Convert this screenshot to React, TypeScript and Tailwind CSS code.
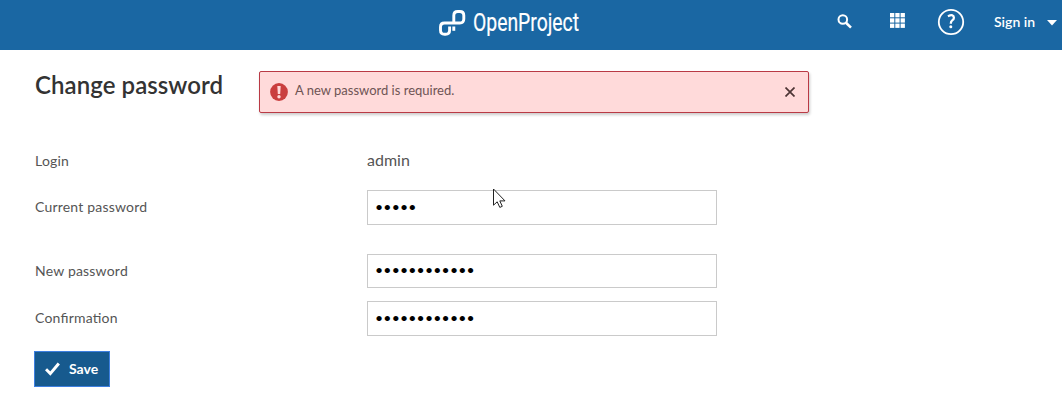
import type { ReactNode } from "react";

function Logo() {
  return (
    <svg width="200" height="48" viewBox="0 0 200 48" className="block">
      <g fill="none" stroke="#fff" strokeWidth="2.9" strokeLinecap="butt" strokeLinejoin="round">
        <path d="M15.8 23V15.5Q15.8 11.5 19.8 11.5H21.8Q25.8 11.5 25.8 15.5V19Q25.8 23 21.8 23H6.5Q2.5 23 2.5 27V30.3Q2.5 34.3 6.5 34.3H7.6Q11.6 34.3 11.6 30.3V26.5" />
        <path d="M15.8 26.5V30.8" />
      </g>
      <text x="35" y="31" fill="#fff" stroke="#fff" strokeWidth="0.2" fontFamily="Roboto, sans-serif" fontSize="26.5" textLength="106" lengthAdjust="spacingAndGlyphs">
        OpenProject
      </text>
    </svg>
  );
}

function Header() {
  return (
    <header className="flex h-[50px] bg-[#1a67a3] text-white">
      <div className="ml-[438px] w-[200px] shrink-0">
        <Logo />
      </div>
      <nav className="ml-[199px] flex h-[43px] items-center">
        <svg width="15" height="15" viewBox="0 0 15 15" fill="none" stroke="#fff" strokeWidth="2">
          <circle cx="5.8" cy="5.5" r="4.3" />
          <path d="M9 8.7L14 13.6" strokeWidth="2.6" />
        </svg>
        <svg width="15" height="15" viewBox="0 0 15 15" fill="#fff" className="-mt-[2px] ml-[38px]">
          {[0, 5.3, 10.6].map((y) =>
            [0, 5.3, 10.6].map((x) => <rect key={`${x}-${y}`} x={x} y={y} width="4.3" height="4.3" />),
          )}
        </svg>
        <svg width="28" height="28" viewBox="0 0 28 28" fill="none" stroke="#fff" className="ml-[32px]">
          <circle cx="14" cy="14" r="12.2" strokeWidth="1.8" />
          <path d="M10.9 8.2Q16.9 5.6 16.9 9.7Q16.9 11.3 15.2 12.4Q13.8 13.4 13.8 15.7" strokeWidth="2.3" />
          <circle cx="13.8" cy="18.8" r="1.5" fill="#fff" stroke="none" />
        </svg>
        <span className="-mt-[1px] ml-[29px] w-[42px] text-[14px] font-semibold whitespace-nowrap">Sign in</span>
        <svg width="10" height="6" viewBox="0 0 10 6" fill="#fff" className="mt-[2px] ml-[11px]">
          <path d="M0 0H10L5 5.6Z" />
        </svg>
      </nav>
    </header>
  );
}

function ErrorNotice() {
  return (
    <div className="flex h-[42px] w-[550px] items-center rounded-[2px] border border-[#b93a45] bg-[#ffdada] pl-[10px] shadow-[1px_2px_3px_rgba(0,0,0,0.2)]">
      <svg width="18" height="18" viewBox="0 0 18 18">
        <circle cx="9" cy="9" r="8.9" fill="#ca3f3f" />
        <path d="M7.3 3H10.7L10.2 11H7.8Z" fill="#ffdada" />
        <circle cx="9" cy="13.7" r="1.7" fill="#ffdada" />
      </svg>
      <p className="-mt-[2px] ml-[7px] text-[13px] text-[#6e5454]">A new password is required.</p>
      <svg width="10" height="10" viewBox="0 0 10 10" stroke="#4d3535" strokeWidth="1.7" className="-mt-[1px] mr-[13px] ml-auto">
        <path d="M0.5 0.5L9.5 9.5M9.5 0.5L0.5 9.5" />
      </svg>
    </div>
  );
}

function Row({ label, className, children }: { label: string; className: string; children: ReactNode }) {
  return (
    <div className={`flex items-center ${className}`}>
      <label className="w-[332px] pb-[2px] text-[14px] tracking-[0.2px] text-[#555] [font-feature-settings:'liga'_1]">{label}</label>
      {children}
    </div>
  );
}

function Password({ value, className }: { value: string; className: string }) {
  return (
    <input
      type="password"
      defaultValue={value}
      className={`w-[350px] border border-[#cacaca] bg-white px-[7px] pb-[3px] text-[14px] tracking-[0.2px] text-black outline-none ${className}`}
    />
  );
}

export default function App() {
  return (
    <div className="relative h-[403px] overflow-hidden bg-white font-[Lato,sans-serif]">
      <Header />
      <main className="pl-[35px]">
        <div className="flex pt-[21px]">
          <h1 className="w-[224px] text-[24px] leading-[28px] font-semibold tracking-[0.07px] text-[#333]">Change password</h1>
          <ErrorNotice />
        </div>
        <form>
          <Row label="Login" className="mt-[36px] h-[24px]">
            <span className="pb-[2px] text-[16px] text-[#555]">admin</span>
          </Row>
          <Row label="Current password" className="mt-[17px] h-[35px]">
            <Password value="admin" className="h-[35px]" />
          </Row>
          <Row label="New password" className="mt-[29px] h-[34px]">
            <Password value="newpassword1" className="h-[34px]" />
          </Row>
          <Row label="Confirmation" className="mt-[13px] h-[35px]">
            <Password value="newpassword1" className="h-[35px]" />
          </Row>
          <button
            type="button"
            className="mt-[15px] -ml-[1px] flex h-[36px] w-[76px] items-center border border-[#3d7fe0] bg-[#175a8e] pl-[10px] text-[14px] font-bold text-white"
          >
            <svg width="15" height="14" viewBox="0 0 15 14" fill="none" stroke="#fff" strokeWidth="3">
              <path d="M1 7.2L5.3 11.6L13.8 1.5" />
            </svg>
            <span className="ml-[9px] pb-[1px]">Save</span>
          </button>
        </form>
      </main>
      <svg width="13" height="21" viewBox="0 0 13 21" className="absolute top-[188px] left-[493px]">
        <path d="M0.5 1V17.2L4.2 13.8L6.8 19.4L9.3 18.3L6.8 12.9H12Z" fill="#fff" stroke="#222" strokeWidth="1" />
      </svg>
    </div>
  );
}
